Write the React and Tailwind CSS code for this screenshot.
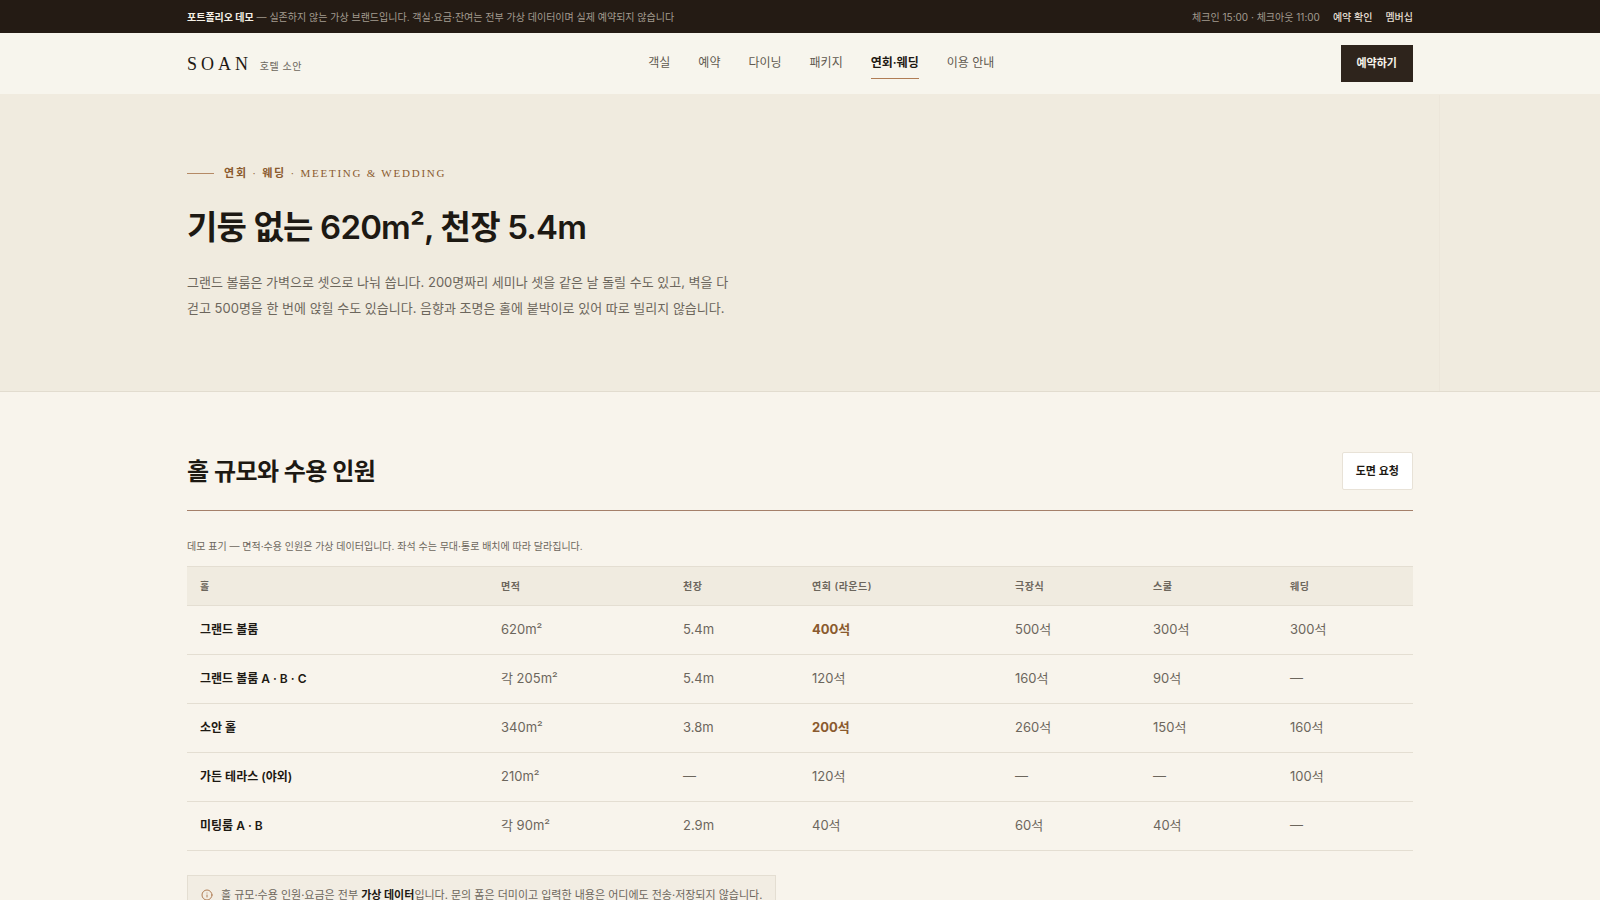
import { Info } from "lucide-react";

const navItems = [
  { label: "객실", href: "#rooms" },
  { label: "예약", href: "#booking" },
  { label: "다이닝", href: "#dining" },
  { label: "패키지", href: "#packages" },
  { label: "연회·웨딩", href: "#wedding", active: true },
  { label: "이용 안내", href: "#guide" },
];

const columns = [
  { label: "홀", width: "w-[301px]" },
  { label: "면적", width: "w-[182px]" },
  { label: "천장", width: "w-[129px]" },
  { label: "연회 (라운드)", width: "w-[203px]" },
  { label: "극장식", width: "w-[138px]" },
  { label: "스쿨", width: "w-[137px]" },
  { label: "웨딩", width: "w-[136px]" },
];

const halls = [
  { name: "그랜드 볼룸", cells: ["620m²", "5.4m", "400석", "500석", "300석", "300석"], best: true },
  { name: "그랜드 볼룸 A · B · C", cells: ["각 205m²", "5.4m", "120석", "160석", "90석", "—"] },
  { name: "소안 홀", cells: ["340m²", "3.8m", "200석", "260석", "150석", "160석"], best: true },
  { name: "가든 테라스 (야외)", cells: ["210m²", "—", "120석", "—", "—", "100석"] },
  { name: "미팅룸 A · B", cells: ["각 90m²", "2.9m", "40석", "60석", "40석", "—"] },
];

function TopBar() {
  return (
    <div className="bg-[#241b14] text-[#a39b90] text-[10px] leading-4">
      <div className="max-w-[1290px] mx-auto px-8 h-[33px] flex items-center justify-between">
        <p>
          <strong className="font-bold text-[#f5f0e6]">포트폴리오 데모</strong> — 실존하지 않는 가상 브랜드입니다. 객실·요금·잔여는 전부 가상 데이터이며 실제 예약되지 않습니다
        </p>
        <div className="flex items-center gap-[13px]">
          <span>체크인 15:00 · 체크아웃 11:00</span>
          <a href="#check" className="font-medium text-[#e6dfd3]">예약 확인</a>
          <a href="#membership" className="font-medium text-[#e6dfd3]">멤버십</a>
        </div>
      </div>
    </div>
  );
}

function Header() {
  return (
    <header className="bg-[#f7f5ed] border-b border-[#f0ebdf]">
      <div className="max-w-[1290px] mx-auto px-8 h-[61px] flex items-center justify-between">
        <a href="#home" className="flex items-baseline gap-2">
          <span className="font-['Liberation_Serif',serif] text-lg leading-6 tracking-[0.22em] text-[#1d1913]">SOAN</span>
          <span className="text-[10px] leading-4 tracking-wider text-[#6c665c]">호텔 소안</span>
        </a>
        <nav className="flex items-center gap-7 text-xs">
          {navItems.map((item) => (
            <a
              key={item.label}
              href={item.href}
              className={
                item.active
                  ? "py-[7px] border-b border-[#b07d55] font-semibold text-[#1d1913]"
                  : "py-[7px] border-b border-transparent text-[#5f594f]"
              }
            >
              {item.label}
            </a>
          ))}
        </nav>
        <button type="button" className="h-[37px] px-4 bg-[#2e241c] text-[#f8f4ec] text-[11px] font-semibold">
          예약하기
        </button>
      </div>
    </header>
  );
}

function Hero() {
  return (
    <section className="relative bg-[#f0ebdf] border-b border-[#e2dccf]">
      {/* faint rule at the tenth of the width */}
      <div className="absolute inset-y-0 right-[10%] w-px bg-[#ece6da]" />
      <div className="max-w-[1290px] mx-auto px-8 pt-[70px] pb-[70px]">
        <p className="flex items-center gap-2.5 text-[11px] leading-4 tracking-[0.16em] text-[#8a5a2e]">
          <span className="w-[27px] h-px bg-[#b58a66]" />
          <span className="font-['Liberation_Serif','Noto_Sans_CJK_KR',serif]">
            <b className="font-bold">연회</b> · <b className="font-bold">웨딩</b> · MEETING &amp; WEDDING
          </span>
        </p>
        <h1 className="mt-6 text-[33px] leading-[44px] font-semibold tracking-tight text-[#1d1913]">
          기둥 없는 620m², 천장 5.4m
        </h1>
        <p className="mt-5 text-[13px] leading-[26px] text-[#6c665c]">
          그랜드 볼룸은 가벽으로 셋으로 나눠 씁니다. 200명짜리 세미나 셋을 같은 날 돌릴 수도 있고, 벽을 다
          <br />
          걷고 500명을 한 번에 앉힐 수도 있습니다. 음향과 조명은 홀에 붙박이로 있어 따로 빌리지 않습니다.
        </p>
      </div>
    </section>
  );
}

function HallTable() {
  return (
    <table className="w-full table-fixed border-collapse text-left">
      <caption className="caption-top pb-3 text-left text-[10px] leading-4 text-[#6c665c]">
        데모 표기 — 면적·수용 인원은 가상 데이터입니다. 좌석 수는 무대·통로 배치에 따라 달라집니다.
      </caption>
      <thead>
        <tr className="h-[39px] bg-[#f0ebe0] border-y border-[#e4ded2]">
          {columns.map((col) => (
            <th key={col.label} scope="col" className={`${col.width} px-[13px] text-[10px] font-semibold tracking-wider text-[#6c665c]`}>
              {col.label}
            </th>
          ))}
        </tr>
      </thead>
      <tbody>
        {halls.map((hall) => (
          <tr key={hall.name} className="h-[49px] border-b border-[#e4ded2]">
            <th scope="row" className="px-[13px] text-xs font-semibold text-[#1d1913]">
              {hall.name}
            </th>
            {hall.cells.map((cell, i) => (
              <td
                key={i}
                className={
                  hall.best && i === 2
                    ? "px-[13px] text-[13px] font-bold text-[#8a5a2e]"
                    : "px-[13px] text-[13px] text-[#6c665c]"
                }
              >
                {cell}
              </td>
            ))}
          </tr>
        ))}
      </tbody>
    </table>
  );
}

export default function App() {
  return (
    <div className="min-h-screen bg-[#f8f4ec] font-[Inter,'Noto_Sans_CJK_KR',sans-serif] text-[#1d1913]">
      <TopBar />
      <Header />
      <Hero />
      <main className="max-w-[1290px] mx-auto px-8 pt-[60px] pb-16">
        <div className="flex items-end justify-between pb-5 border-b border-[#a5806a]">
          <h2 className="text-2xl leading-9 font-semibold tracking-tight">홀 규모와 수용 인원</h2>
          <button type="button" className="h-[38px] px-[13px] bg-white border border-[#e8e2d7] rounded-xs text-[11px] font-semibold">
            도면 요청
          </button>
        </div>
        <div className="mt-[27px]">
          <HallTable />
        </div>
        <div className="mt-6 w-fit flex items-center gap-2 px-[13px] py-[11px] bg-[#f2ede3] border border-[#e4ded2] text-[11px] leading-4 text-[#6c665c]">
          <Info size={12} className="text-[#b07d55]" />
          <p>
            홀 규모·수용 인원·요금은 전부 <strong className="font-bold text-[#1d1913]">가상 데이터</strong>입니다. 문의 폼은 더미이고 입력한 내용은 어디에도 전송·저장되지 않습니다.
          </p>
        </div>
      </main>
    </div>
  );
}
